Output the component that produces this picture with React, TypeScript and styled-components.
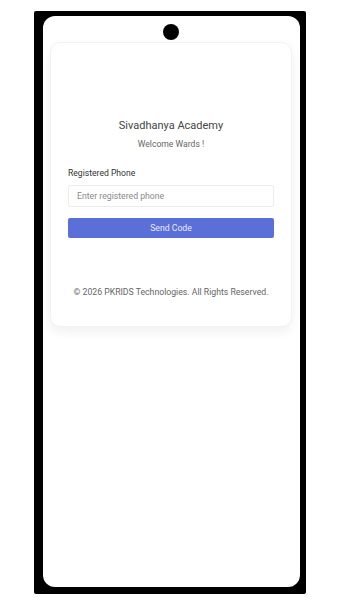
import React from 'react';
import styled, { createGlobalStyle } from 'styled-components';

const GlobalStyle = createGlobalStyle`
  html, body {
    margin: 0;
    padding: 0;
    background: #ffffff;
    font-family: Roboto, "Liberation Sans", Arial, sans-serif;
  }
  * {
    box-sizing: border-box;
  }
`;

// Phone bezel
const Frame = styled.div`
  margin: 11px 0 0 34px;
  width: 272px;
  height: 583px;
  background: #000;
  border-radius: 2px;
  padding: 5px 6px 7px 9px;
`;

const Screen = styled.div`
  position: relative;
  height: 100%;
  background: #fff;
  border-radius: 12px;
  padding: 26px 8px 0 7px;
`;

const Camera = styled.div`
  position: absolute;
  top: 8px;
  left: 120px;
  width: 16px;
  height: 16px;
  border-radius: 50%;
  background: #000;
`;

const Card = styled.div`
  width: 242px;
  background: #fff;
  border: 1px solid #f2f2f2;
  border-radius: 10px;
  box-shadow: 0 5px 12px rgba(0, 0, 0, 0.06);
  padding: 76px 17px 28px;
  display: flex;
  flex-direction: column;
`;

const Title = styled.h1`
  margin: 0;
  font-size: 11px;
  line-height: 14px;
  font-weight: 400;
  color: #444;
  text-align: center;
`;

const Subtitle = styled.p`
  margin: 5px 0 0;
  font-size: 8.6px;
  line-height: 12px;
  color: #666;
  text-align: center;
`;

const Label = styled.label`
  margin-top: 17px;
  font-size: 8.6px;
  line-height: 12px;
  font-weight: 400;
  color: #333;
`;

const Input = styled.input`
  margin-top: 6px;
  height: 22px;
  width: 100%;
  border: 1px solid #ececec;
  border-radius: 2px;
  padding: 0 8px;
  font-family: inherit;
  font-size: 8.7px;
  color: #333;
  outline: none;
  &::placeholder {
    color: #8a8a8a;
  }
`;

const Button = styled.button`
  margin-top: 11px;
  height: 20px;
  width: 100%;
  border: none;
  border-radius: 2px;
  background: #5b6fd8;
  color: #e8ebff;
  font-family: inherit;
  font-size: 8.7px;
  cursor: pointer;
`;

const Footer = styled.p`
  margin: 48px 0 0;
  font-size: 8.7px;
  line-height: 12px;
  color: #666;
  text-align: center;
`;

const App: React.FC = () => {
  return (
    <>
      <GlobalStyle />
      <Frame>
        <Screen>
          <Camera />
          <Card>
            <Title>Sivadhanya Academy</Title>
            <Subtitle>Welcome Wards !</Subtitle>
            <Label htmlFor="phone">Registered Phone</Label>
            <Input id="phone" placeholder="Enter registered phone" />
            <Button>Send Code</Button>
            <Footer>© 2026 PKRIDS Technologies. All Rights Reserved.</Footer>
          </Card>
        </Screen>
      </Frame>
    </>
  );
};

export default App;
